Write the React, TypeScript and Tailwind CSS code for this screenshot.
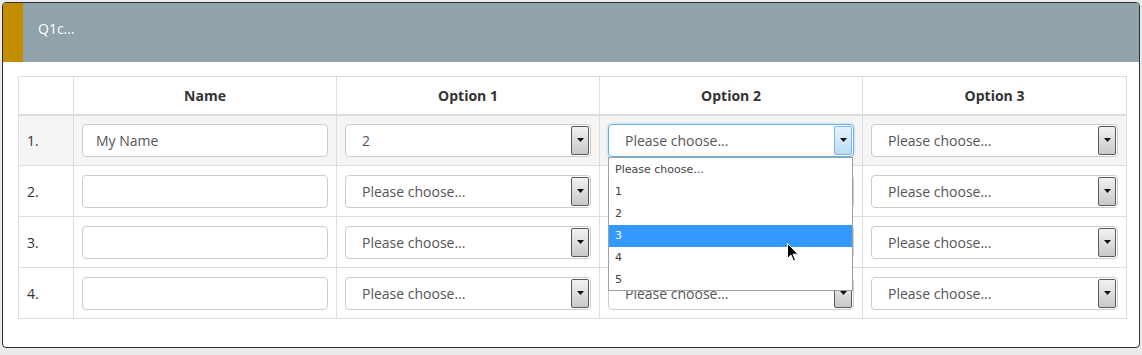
import React from 'react';

const rows = [
    { n: '1.', name: 'My Name', o1: '2', o2: 'Please choose...', o3: 'Please choose...' },
    { n: '2.', name: '', o1: 'Please choose...', o2: 'Please choose...', o3: 'Please choose...' },
    { n: '3.', name: '', o1: 'Please choose...', o2: 'Please choose...', o3: 'Please choose...' },
    { n: '4.', name: '', o1: 'Please choose...', o2: 'Please choose...', o3: 'Please choose...' },
];

const options = ['Please choose...', '1', '2', '3', '4', '5'];

function ArrowButton({ focused }: { focused?: boolean }) {
    return (
        <div
            className={
                'flex h-full w-[18px] items-center justify-center rounded-[2px] border ' +
                (focused
                    ? 'border-[#7eb4ea] bg-gradient-to-b from-[#e5f3fb] to-[#bcdcf4]'
                    : 'border-[#5a5a5a] bg-gradient-to-b from-[#f2f2f2] to-[#c9c9c9]')
            }
        >
            <svg width="7" height="4" viewBox="0 0 7 4">
                <path d="M0 0 H7 L3.5 4 Z" fill="#111" />
            </svg>
        </div>
    );
}

function FakeSelect({ value, focused }: { value: string; focused?: boolean }) {
    return (
        <div
            className={
                'flex h-[33px] w-full items-center rounded-[4px] border bg-white pl-[16px] ' +
                (focused ? 'border-[#66afe9] shadow-[0_0_3px_rgba(102,175,233,0.6)]' : 'border-[#cccccc]')
            }
        >
            <span className="flex-1 truncate text-[14px] text-[#555]">{value}</span>
            <div className="h-full py-[1px] pr-[1px]">
                <ArrowButton focused={focused} />
            </div>
        </div>
    );
}

function Dropdown() {
    return (
        <div className="absolute left-0 top-[33px] z-10 w-[245px] border border-[#a0a0a0] bg-white pt-[1px] font-['DejaVu_Sans',sans-serif] text-[11px] text-[#444]">
            {options.map((o, i) => (
                <div
                    key={o}
                    className={
                        'flex items-center pl-[6px] ' +
                        (i === options.length - 1 ? 'h-[21px] pt-[2px] ' : 'h-[22px] ') +
                        (o === '3' ? 'bg-[#3399ff] text-white' : '')
                    }
                >
                    {o}
                </div>
            ))}
        </div>
    );
}

function Cursor() {
    return (
        <svg className="absolute left-[179px] top-[119px] z-20" width="12" height="19" viewBox="0 0 12 19">
            <path d="M0.5 0.5 V15.5 L4 12 L6.5 18 L8.5 17 L6 11.2 H11 Z" fill="#000" stroke="#fff" strokeWidth="1" />
        </svg>
    );
}

export default function App() {
    return (
        <div className="min-h-[355px] bg-[#ebebeb] p-[2px] font-['Open_Sans',sans-serif]">
            <div className="h-[346px] overflow-visible rounded-[4px] border border-[#2b2f33] bg-white">
                <div className="flex h-[59px] overflow-hidden rounded-t-[3px] bg-[#90a3aa]">
                    <div className="w-[20px] bg-[#c28d00]" />
                    <div className="flex items-center pb-[8px] pl-[15px] text-[14px] text-white">Q1c...</div>
                </div>
                <div className="px-[15px] pt-[14px]">
                    <table className="w-[1108px] table-fixed border-collapse text-[14px] text-[#333]">
                        <colgroup>
                            <col className="w-[55px]" />
                            <col className="w-[263px]" />
                            <col className="w-[263px]" />
                            <col className="w-[263px]" />
                            <col className="w-[264px]" />
                        </colgroup>
                        <thead>
                            <tr className="h-[38px]">
                                <th className="border border-b-2 border-[#dddddd]" />
                                <th className="border border-b-2 border-[#dddddd] font-bold">Name</th>
                                <th className="border border-b-2 border-[#dddddd] font-bold">Option 1</th>
                                <th className="border border-b-2 border-[#dddddd] font-bold">Option 2</th>
                                <th className="border border-b-2 border-[#dddddd] font-bold">Option 3</th>
                            </tr>
                        </thead>
                        <tbody>
                            {rows.map((r, i) => (
                                <tr key={r.n} className={'h-[51px] ' + (i === 0 ? 'bg-[#f5f5f5]' : 'bg-white')}>
                                    <td className="border border-[#dddddd] pl-[8px]">{r.n}</td>
                                    <td className="border border-[#dddddd] px-[8px]">
                                        <div className="flex h-[33px] items-center rounded-[4px] border border-[#cccccc] bg-white pl-[13px] text-[#555]">
                                            {r.name}
                                        </div>
                                    </td>
                                    <td className="border border-[#dddddd] px-[8px]">
                                        <FakeSelect value={r.o1} />
                                    </td>
                                    <td className="border border-[#dddddd] px-[8px]">
                                        {i === 0 ? (
                                            <div className="relative">
                                                <FakeSelect value={r.o2} focused />
                                                <Dropdown />
                                                <Cursor />
                                            </div>
                                        ) : (
                                            <FakeSelect value={r.o2} />
                                        )}
                                    </td>
                                    <td className="border border-[#dddddd] px-[8px]">
                                        <FakeSelect value={r.o3} />
                                    </td>
                                </tr>
                            ))}
                        </tbody>
                    </table>
                </div>
            </div>
        </div>
    );
}
